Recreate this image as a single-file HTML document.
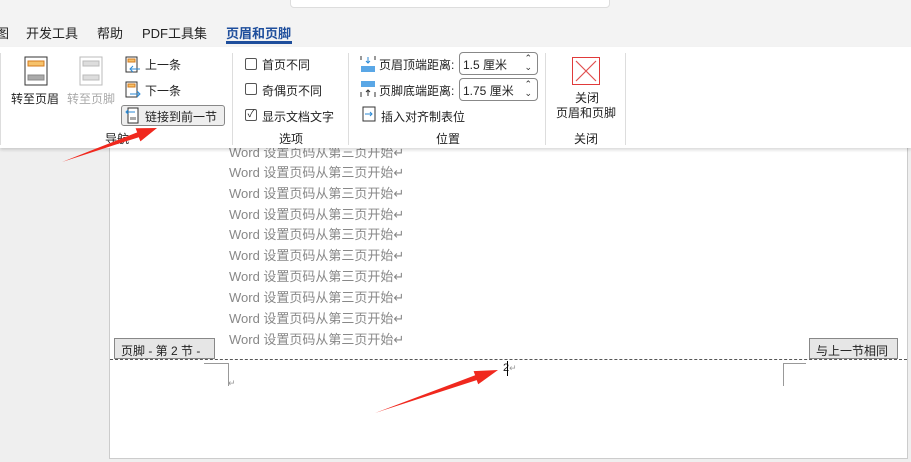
<!DOCTYPE html>
<html><head><meta charset="utf-8"><style>
*{margin:0;padding:0;box-sizing:border-box}
body{width:911px;height:462px;overflow:hidden;background:#efefef;font-family:"Liberation Sans","Noto Sans CJK SC",sans-serif;font-size:12px;color:#222;position:relative}
.a{position:absolute;white-space:nowrap}
.top{position:absolute;left:0;top:0;width:911px;height:47px;background:#f3f3f3}
.search{position:absolute;left:290px;top:-4px;width:320px;height:12px;background:#fff;border:1px solid #ddd;border-radius:4px}
.tab{position:absolute;top:23px;font-size:13px;color:#222}
.ribbon{position:absolute;left:0;top:47px;width:911px;height:101px;background:#fff;box-shadow:0 2px 3px rgba(0,0,0,.15);z-index:2}
.sep{position:absolute;top:6px;width:1px;height:92px;background:#ddd}
.page{position:absolute;left:109px;top:140px;width:799px;height:319px;background:#fff;border:1px solid #ccc;border-top:none}
.ln{position:absolute;left:229px;font-size:13px;color:#888}
.cb{position:absolute;width:12px;height:12px;border:1px solid #555;border-radius:2px;background:#fff}
.spin{position:absolute;width:79px;height:23px;border:1px solid #888;border-radius:4px;background:#fff;font-size:12px;padding:3px 0 0 3px}
.spin i{position:absolute;right:5px;top:1px;font-style:normal;font-size:9px;line-height:9px;color:#333}
</style></head><body>
<div class="top"><div class="search"></div></div>
<div class="tab" style="left:-4px">图</div>
<div class="tab" style="left:26px">开发工具</div>
<div class="tab" style="left:97px">帮助</div>
<div class="tab" style="left:142px">PDF工具集</div>
<div class="tab" style="left:226px;color:#1e4e9c;font-weight:bold">页眉和页脚</div>
<div class="a" style="left:226px;top:41px;width:66px;height:3px;background:#1e4e9c"></div>
<div class="ribbon">
 <div class="sep" style="left:0"></div>
 <div class="sep" style="left:232px"></div>
 <div class="sep" style="left:348px"></div>
 <div class="sep" style="left:545px"></div>
 <div class="sep" style="left:625px"></div>
 <svg class="a" style="left:24px;top:9px" width="24" height="30"><rect x="1" y="1" width="22" height="28" fill="#fff" stroke="#333"/><rect x="4" y="5" width="16" height="5" fill="#f6c26b" stroke="#d47b1e"/><rect x="4" y="19" width="16" height="5" fill="#aaa" stroke="#888"/></svg>
 <div class="a" style="left:11px;top:43px;font-size:12px">转至页眉</div>
 <svg class="a" style="left:79px;top:9px" width="24" height="30"><rect x="1" y="1" width="22" height="28" fill="#fff" stroke="#bbb"/><rect x="4" y="5" width="16" height="5" fill="#ddd" stroke="#bbb"/><rect x="4" y="19" width="16" height="5" fill="#ddd" stroke="#bbb"/></svg>
 <div class="a" style="left:67px;top:43px;font-size:12px;color:#aaa">转至页脚</div>
 <svg class="a" style="left:125px;top:9px" width="16" height="18"><rect x="1" y="1" width="11" height="15" fill="#fff" stroke="#333"/><rect x="3" y="3" width="7" height="3" fill="#f6c26b" stroke="#d47b1e"/><path d="M15 13H6M8 10l-3 3 3 3" stroke="#2b8ad6" fill="none"/></svg>
 <div class="a" style="left:145px;top:9px">上一条</div>
 <svg class="a" style="left:125px;top:34px" width="16" height="18"><rect x="1" y="1" width="11" height="15" fill="#fff" stroke="#333"/><rect x="3" y="3" width="7" height="3" fill="#f6c26b" stroke="#d47b1e"/><path d="M5 13h9M12 10l3 3-3 3" stroke="#2b8ad6" fill="none"/></svg>
 <div class="a" style="left:145px;top:35px">下一条</div>
 <div class="a" style="left:121px;top:58px;width:104px;height:21px;background:#eee;border:1px solid #888;border-radius:3px"></div>
 <svg class="a" style="left:125px;top:60px" width="16" height="18"><rect x="3" y="1" width="10" height="15" fill="#fff" stroke="#333"/><rect x="5" y="10" width="6" height="3" fill="#aaa"/><path d="M10 5H1M3 3L1 5l2 2" stroke="#2b8ad6" fill="none"/></svg>
 <div class="a" style="left:145px;top:61px">链接到前一节</div>
 <div class="a" style="left:105px;top:83px">导航</div>
 <div class="cb" style="left:245px;top:11px"></div><div class="a" style="left:262px;top:9px">首页不同</div>
 <div class="cb" style="left:245px;top:36px"></div><div class="a" style="left:262px;top:35px">奇偶页不同</div>
 <div class="cb" style="left:245px;top:62px;font-size:10px;line-height:10px;text-align:center">✓</div><div class="a" style="left:262px;top:61px">显示文档文字</div>
 <div class="a" style="left:279px;top:83px">选项</div>
 <svg class="a" style="left:360px;top:8px" width="16" height="18"><path d="M1 1v4M15 1v4" stroke="#333"/><rect x="1" y="11" width="14" height="6" fill="#5aa7e6"/><path d="M8 2v6M6 6l2 2 2-2" stroke="#2b8ad6" fill="none"/></svg>
 <div class="a" style="left:379px;top:9px">页眉顶端距离:</div>
 <div class="spin" style="left:459px;top:5px">1.5 厘米<i>⌃<br>⌄</i></div>
 <svg class="a" style="left:360px;top:33px" width="16" height="18"><rect x="1" y="1" width="14" height="6" fill="#5aa7e6"/><path d="M1 12v5M15 12v5M8 16v-6M6 12l2-2 2 2" stroke="#333" fill="none"/></svg>
 <div class="a" style="left:379px;top:35px">页脚底端距离:</div>
 <div class="spin" style="left:459px;top:31px">1.75 厘米<i>⌃<br>⌄</i></div>
 <svg class="a" style="left:362px;top:59px" width="14" height="16"><rect x="1" y="1" width="12" height="14" fill="#fff" stroke="#333"/><path d="M3 8h7M8 6l2 2-2 2" stroke="#2b8ad6" fill="none"/></svg>
 <div class="a" style="left:381px;top:61px">插入对齐制表位</div>
 <div class="a" style="left:436px;top:83px">位置</div>
 <svg class="a" style="left:572px;top:10px" width="28" height="28"><rect x="0.5" y="0.5" width="27" height="27" fill="#fff" stroke="#e03a3a"/><path d="M4 4l20 20M24 4L4 24" stroke="#e05050" stroke-width="1.2"/></svg>
 <div class="a" style="left:575px;top:42px">关闭</div>
 <div class="a" style="left:556px;top:57px">页眉和页脚</div>
 <div class="a" style="left:574px;top:83px">关闭</div>
</div>
<div class="page"></div>
<div class="ln" style="top:142px">Word 设置页码从第三页开始↵</div>
<div class="ln" style="top:162px">Word 设置页码从第三页开始↵</div>
<div class="ln" style="top:183px">Word 设置页码从第三页开始↵</div>
<div class="ln" style="top:204px">Word 设置页码从第三页开始↵</div>
<div class="ln" style="top:224px">Word 设置页码从第三页开始↵</div>
<div class="ln" style="top:245px">Word 设置页码从第三页开始↵</div>
<div class="ln" style="top:266px">Word 设置页码从第三页开始↵</div>
<div class="ln" style="top:287px">Word 设置页码从第三页开始↵</div>
<div class="ln" style="top:308px">Word 设置页码从第三页开始↵</div>
<div class="ln" style="top:329px">Word 设置页码从第三页开始↵</div>
<div class="a" style="left:110px;top:359px;width:797px;border-top:1px dashed #555"></div>
<div class="a" style="left:114px;top:338px;width:101px;height:21px;background:#e6e6e6;border:1px solid #888;font-size:12px;padding:3px 0 0 6px">页脚 - 第 2 节 -</div>
<div class="a" style="left:809px;top:338px;width:89px;height:21px;background:#e6e6e6;border:1px solid #888;font-size:12px;padding:3px 0 0 6px">与上一节相同</div>
<div class="a" style="left:204px;top:363px;width:25px;height:23px;border-top:1px solid #999;border-right:1px solid #999"></div>
<div class="a" style="left:228px;top:378px;font-size:9px;color:#999">↵</div>
<div class="a" style="left:783px;top:363px;width:23px;height:23px;border-top:1px solid #999;border-left:1px solid #999"></div>
<div class="a" style="left:503px;top:362px;font-size:11px">2<span style="color:#999;font-size:9px">↵</span></div>
<div class="a" style="left:507px;top:361px;width:1px;height:15px;background:#000"></div>
<svg class="a" style="left:0;top:0;z-index:3" width="911" height="462"><polygon points="62,162 138.8,137.2 140.4,141.4 157,128 135.6,128.2 137.2,132.4" fill="#f0281e"/><polygon points="375,413 476.7,380.1 478.2,384.3 498,370 473.6,371.1 475.1,375.3" fill="#f0281e"/></svg>
</body></html>
